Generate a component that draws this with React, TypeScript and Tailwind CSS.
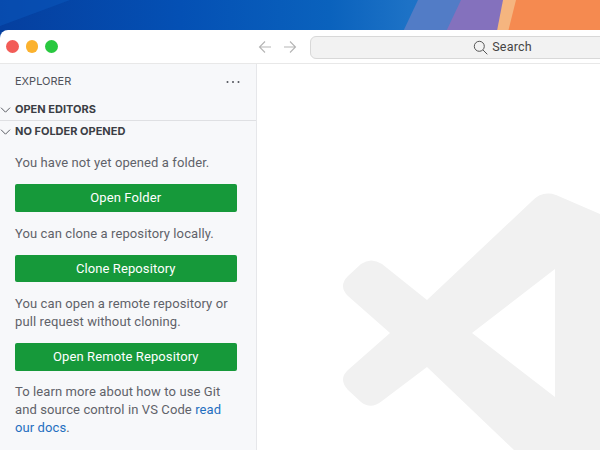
export default function App() {
  const btn = "w-[221.5px] h-[27.5px] pt-[1px] rounded-[2px] bg-[#16993a] text-white block font-['Roboto',sans-serif] text-[13px] tracking-[0.1px]";
  const chevron = (
    <svg width="11" height="6" viewBox="0 0 11 6" fill="none" stroke="#5a5d63" strokeWidth="1" className="mr-[4px] shrink-0"><path d="m1 .7 4.5 4.5L10 .7" /></svg>
  );
  return (
    <div className="w-[600px] h-[450px] overflow-hidden flex flex-col bg-[#0a4fae] text-[13px] font-['Inter',sans-serif]">
      <div className="h-[30px] shrink-0">
        <svg width="600" height="36" viewBox="0 0 600 36" className="block">
          <defs>
            <linearGradient id="sky" x1="0" y1="0" x2="1" y2="0">
              <stop offset="0" stopColor="#053f9f" />
              <stop offset="0.3" stopColor="#0450b4" />
              <stop offset="0.55" stopColor="#0a62bd" />
              <stop offset="0.68" stopColor="#1d72c6" />
              <stop offset="1" stopColor="#2a78cc" />
            </linearGradient>
          </defs>
          <rect width="600" height="36" fill="url(#sky)" />
          <polygon points="0,0 70,0 0,26" fill="#0a5cc0" opacity="0.45" />
          <polygon points="418,0 600,0 600,36 401,36" fill="#527cc6" />
          <polygon points="461,0 600,0 600,36 444,36" fill="#8471bd" />
          <polygon points="503,0 600,0 600,36 496,36" fill="#f5b57f" />
          <polygon points="516,0 600,0 600,36 507,36" fill="#f58a50" />
        </svg>
      </div>
      <div className="flex-1 flex flex-col bg-white rounded-tl-[8px] min-h-0">
        <div className="h-[34px] shrink-0 flex items-center border-b border-[#e8e8e8]">
          <div className="flex items-center gap-[7px] pl-[6px]">
            <span className="w-[12.5px] h-[12.5px] rounded-full bg-[#f25c57]" />
            <span className="w-[12.5px] h-[12.5px] rounded-full bg-[#fbb22e]" />
            <span className="w-[12.5px] h-[12.5px] rounded-full bg-[#28c83f]" />
          </div>
          <div className="flex items-center gap-[11px] ml-[200.5px]">
            <svg width="14" height="14" viewBox="0 0 14 14" fill="none" stroke="#b5b5b5" strokeWidth="1.1"><path d="M13 7H1.5M7 1.5 1.5 7 7 12.5" /></svg>
            <svg width="14" height="14" viewBox="0 0 14 14" fill="none" stroke="#b5b5b5" strokeWidth="1.1"><path d="M1 7h11.5M7 1.5 12.5 7 7 12.5" /></svg>
          </div>
          <div className="ml-[13px] w-[385px] shrink-0 h-[23px] mt-[1px] pt-[1px] rounded-[6px] bg-[#f2f2f2] border border-[#d8d8d8] flex items-center justify-center gap-[4px] text-[#444] text-[12.5px] font-['Roboto',sans-serif] tracking-[0.2px]">
            <svg width="15" height="15" viewBox="0 0 15 15" fill="none" stroke="#555" strokeWidth="1"><circle cx="6.3" cy="6.3" r="5" /><path d="m10 10 4.3 4.3" /></svg>
            <span>Search</span>
          </div>
        </div>
        <div className="flex-1 flex min-h-0">
          <aside className="w-[257px] shrink-0 bg-[#f7f8fa] border-r border-[#e6e7ea] text-[#5f6269] overflow-hidden">
            <div className="flex items-center justify-between h-[35px] pl-[15px] pr-[16px] text-[11px] text-[#50535a]">
              <span>EXPLORER</span>
              <svg width="14" height="4" viewBox="0 0 14 4" fill="#50535a"><circle cx="1.5" cy="2" r="1" /><circle cx="7" cy="2" r="1" /><circle cx="12.5" cy="2" r="1" /></svg>
            </div>
            <div className="flex items-center h-[22px] text-[11px] font-bold text-[#3b3e45] border-b border-[#dfe0e3]">
              {chevron}
              OPEN EDITORS
            </div>
            <div className="flex items-center h-[21px] text-[11px] font-bold text-[#3b3e45]">
              {chevron}
              NO FOLDER OPENED
            </div>
            <div className="px-[15px] pt-[12px] w-[252px] text-[13px] leading-[18px] font-['Roboto',sans-serif] tracking-[0.1px]">
              <p className="mb-[12px]">You have not yet opened a folder.</p>
              <button className={btn}>Open Folder</button>
              <p className="mt-[13px] mb-[12px]">You can clone a repository locally.</p>
              <button className={btn}>Clone Repository</button>
              <p className="mt-[13px] mb-[12px]">You can open a remote repository or pull request without cloning.</p>
              <button className={btn}>Open Remote Repository</button>
              <p className="mt-[12px]">To learn more about how to use Git and source control in VS Code <span className="text-[#1f6fc0]">read our docs</span>.</p>
            </div>
          </aside>
          <main className="flex-1 relative bg-white overflow-hidden">
            <svg width="343" height="386" viewBox="257 64 343 386" className="absolute left-0 top-0">
              <path fillRule="evenodd" fill="#f1f1f1" d="M427 300 L531 202 Q542 190 556 195 L600 214 V450 H514 L427 367 L382 401 Q371 410 361 402 L348 390 Q338 379 348 370 L390 333 L348 296 Q338 286 348 276 L361 264 Q371 257 382 264 Z M555 269 L472 333 L555 397 Z" />
            </svg>
          </main>
        </div>
      </div>
    </div>
  );
}
